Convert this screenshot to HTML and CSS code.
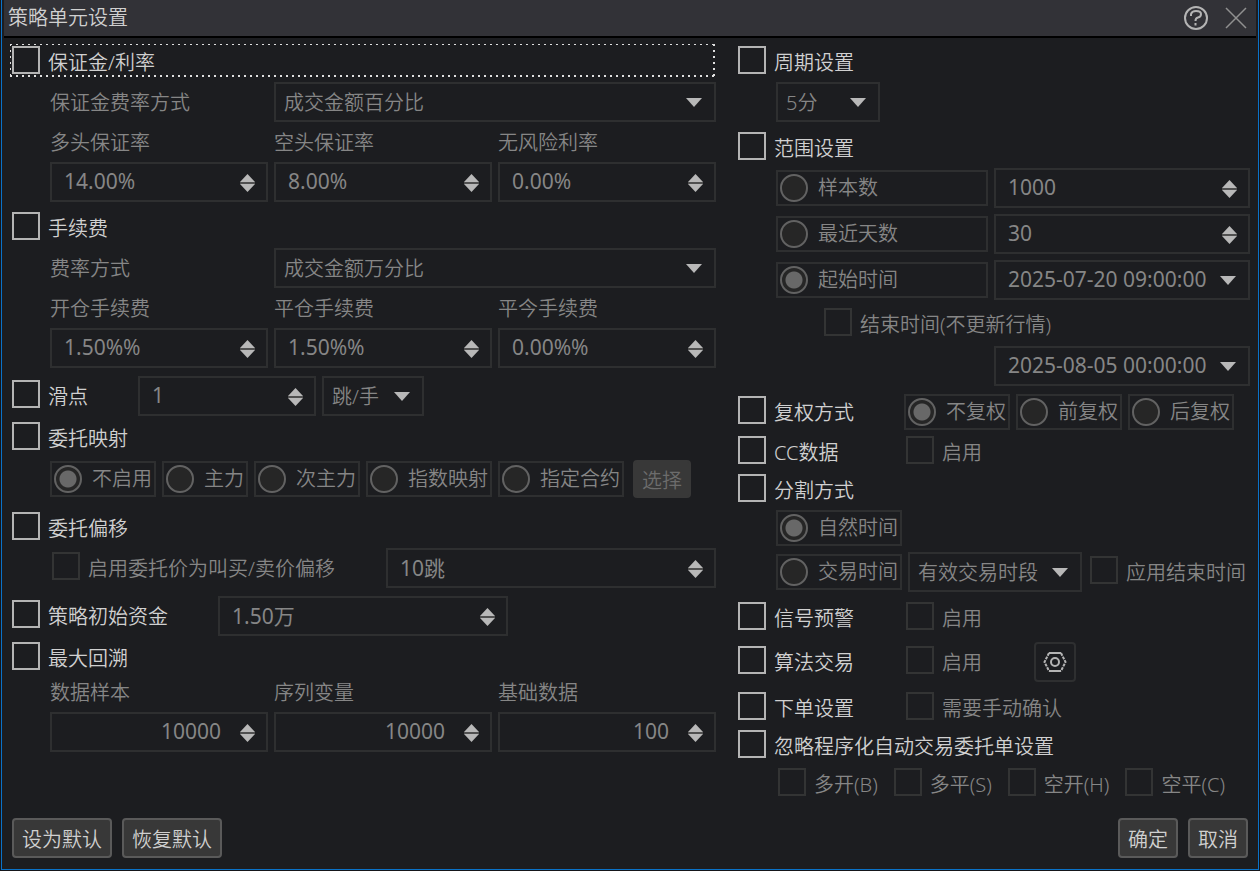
FILE: index.html
```html
<!DOCTYPE html>
<html lang="zh-CN">
<head>
  <meta charset="UTF-8">
  <title>策略单元设置</title>
  <link rel="stylesheet" href="styles.css">
</head>
<body>
  <div class="window">
    <header class="title_bar">
      <h1>策略单元设置</h1>
      <button class="icon_btn" aria-label="帮助">
        <svg width="26" height="26" viewBox="0 0 26 26" fill="none" stroke="#b4b4b4" stroke-width="2">
          <circle cx="13" cy="13" r="11"/>
          <path d="M8 11V9Q9 6 13 6Q18 6 18 9Q18 12 15 12.500Q12.500 13 12.500 16"/>
          <path d="M12.500 18V20.500"/>
        </svg>
      </button>
      <button class="icon_btn" aria-label="关闭">
        <svg width="22" height="22" viewBox="0 0 22 22" fill="none" stroke="#909090" stroke-width="1.500">
          <path d="M1 1L21 21M21 1L1 21"/>
        </svg>
      </button>
    </header>

    <main class="content">
      <!-- 左侧 -->
      <section class="col">
        <label class="check focus"><input type="checkbox">保证金/利率</label>
        <div class="grid3 mt6">
          <label class="text" for="margin_type">保证金费率方式</label>
          <span class="drop wide"><select id="margin_type" disabled><option>成交金额百分比</option></select></span>
        </div>
        <div class="grid3">
          <label class="text" for="long_rate">多头保证率</label>
          <label class="text" for="short_rate">空头保证率</label>
          <label class="text" for="free_rate">无风险利率</label>
          <span class="spin"><input type="text" id="long_rate" value="14.00%" disabled></span>
          <span class="spin"><input type="text" id="short_rate" value="8.00%" disabled></span>
          <span class="spin"><input type="text" id="free_rate" value="0.00%" disabled></span>
        </div>

        <label class="check mt10"><input type="checkbox">手续费</label>
        <div class="grid3 mt6">
          <label class="text" for="fee_type">费率方式</label>
          <span class="drop wide"><select id="fee_type" disabled><option>成交金额万分比</option></select></span>
        </div>
        <div class="grid3">
          <label class="text" for="open_fee">开仓手续费</label>
          <label class="text" for="close_fee">平仓手续费</label>
          <label class="text" for="today_fee">平今手续费</label>
          <span class="spin"><input type="text" id="open_fee" value="1.50%%" disabled></span>
          <span class="spin"><input type="text" id="close_fee" value="1.50%%" disabled></span>
          <span class="spin"><input type="text" id="today_fee" value="0.00%%" disabled></span>
        </div>

        <div class="row mt8">
          <label class="check slip"><input type="checkbox">滑点</label>
          <span class="spin slip_num"><input type="text" value="1" aria-label="滑点" disabled></span>
          <span class="drop slip_unit"><select aria-label="滑点单位" disabled><option>跳/手</option></select></span>
        </div>

        <label class="check mt6"><input type="checkbox">委托映射</label>
        <div class="row inset mt8">
          <label class="radio"><input type="radio" name="mapping" checked disabled>不启用</label>
          <label class="radio"><input type="radio" name="mapping" disabled>主力</label>
          <label class="radio"><input type="radio" name="mapping" disabled>次主力</label>
          <label class="radio"><input type="radio" name="mapping" disabled>指数映射</label>
          <label class="radio"><input type="radio" name="mapping" disabled>指定合约</label>
          <button class="btn choose" disabled>选择</button>
        </div>

        <label class="check mt14"><input type="checkbox">委托偏移</label>
        <div class="row inset mt6">
          <label class="check dim grow"><input type="checkbox" disabled>启用委托价为叫买/卖价偏移</label>
          <span class="spin offset_num"><input type="text" value="10跳" aria-label="偏移" disabled></span>
        </div>

        <div class="row mt8">
          <label class="check fund"><input type="checkbox">策略初始资金</label>
          <span class="spin fund_num"><input type="text" value="1.50万" aria-label="策略初始资金" disabled></span>
        </div>

        <label class="check mt6"><input type="checkbox">最大回溯</label>
        <div class="grid3">
          <label class="text" for="sample">数据样本</label>
          <label class="text" for="series">序列变量</label>
          <label class="text" for="base">基础数据</label>
          <span class="spin right"><input type="text" id="sample" value="10000" disabled></span>
          <span class="spin right"><input type="text" id="series" value="10000" disabled></span>
          <span class="spin right"><input type="text" id="base" value="100" disabled></span>
        </div>
      </section>

      <!-- 右侧 -->
      <section class="col">
        <label class="check"><input type="checkbox">周期设置</label>
        <div class="row inset mt6">
          <span class="drop period"><select aria-label="周期" disabled><option>5分</option></select></span>
        </div>

        <label class="check mt10"><input type="checkbox">范围设置</label>
        <div class="range inset mt6">
          <label class="radio"><input type="radio" name="range" disabled>样本数</label>
          <span class="spin"><input type="text" value="1000" aria-label="样本数" disabled></span>
          <label class="radio"><input type="radio" name="range" disabled>最近天数</label>
          <span class="spin"><input type="text" value="30" aria-label="最近天数" disabled></span>
          <label class="radio"><input type="radio" name="range" checked disabled>起始时间</label>
          <span class="drop"><input type="text" value="2025-07-20 09:00:00" aria-label="起始时间" disabled></span>
        </div>
        <label class="check dim end_time mt8"><input type="checkbox" disabled>结束时间(不更新行情)</label>
        <div class="range inset mt8">
          <span class="drop second"><input type="text" value="2025-08-05 00:00:00" aria-label="结束时间" disabled></span>
        </div>

        <div class="row mt8">
          <label class="check name"><input type="checkbox">复权方式</label>
          <label class="radio"><input type="radio" name="right" checked disabled>不复权</label>
          <label class="radio"><input type="radio" name="right" disabled>前复权</label>
          <label class="radio"><input type="radio" name="right" disabled>后复权</label>
        </div>
        <div class="row mt6">
          <label class="check name"><input type="checkbox">CC数据</label>
          <label class="check dim"><input type="checkbox" disabled>启用</label>
        </div>

        <label class="check mt6"><input type="checkbox">分割方式</label>
        <div class="row inset mt6">
          <label class="radio"><input type="radio" name="split" checked disabled>自然时间</label>
        </div>
        <div class="row inset mt6">
          <label class="radio"><input type="radio" name="split" disabled>交易时间</label>
          <span class="drop session"><select aria-label="交易时段" disabled><option>有效交易时段</option></select></span>
          <label class="check dim"><input type="checkbox" disabled>应用结束时间</label>
        </div>

        <div class="row mt10">
          <label class="check name"><input type="checkbox">信号预警</label>
          <label class="check dim"><input type="checkbox" disabled>启用</label>
        </div>
        <div class="row mt8">
          <label class="check name"><input type="checkbox">算法交易</label>
          <label class="check dim algo"><input type="checkbox" disabled>启用</label>
          <button class="gear" aria-label="算法设置">
            <svg width="24" height="20" viewBox="0 0 24 20" fill="none" stroke="#b4b4b4" stroke-width="2">
              <path d="M6 1H18M6 19H18"/>
              <path d="M6 1L1.500 10L6 19M18 1L22.500 10L18 19" stroke-dasharray="3 1"/>
              <circle cx="12" cy="10" r="4"/>
            </svg>
          </button>
        </div>
        <div class="row mt10">
          <label class="check name"><input type="checkbox">下单设置</label>
          <label class="check dim"><input type="checkbox" disabled>需要手动确认</label>
        </div>

        <label class="check mt6"><input type="checkbox">忽略程序化自动交易委托单设置</label>
        <div class="row inset ignore mt8">
          <label class="check dim"><input type="checkbox" disabled>多开(B)</label>
          <label class="check dim"><input type="checkbox" disabled>多平(S)</label>
          <label class="check dim"><input type="checkbox" disabled>空开(H)</label>
          <label class="check dim"><input type="checkbox" disabled>空平(C)</label>
        </div>
      </section>
    </main>

    <footer class="footer">
      <button class="btn">设为默认</button>
      <button class="btn">恢复默认</button>
      <button class="btn ok">确定</button>
      <button class="btn">取消</button>
    </footer>
  </div>
</body>
</html>
```
FILE: styles.css
```css
* {
  box-sizing: border-box;
  margin: 0;
  padding: 0;
}
body {
  background: #15161a;
  color: #d0d0d0;
}
body,
button,
input,
select {
  font-family: "Noto Sans", "Noto Sans CJK SC", sans-serif;
  font-size: 20px;
  font-weight: 350;
}
.window {
  display: flex;
  flex-direction: column;
  min-height: calc(100vh - 1px);
  margin: 0 1px;
  border: 1px solid #0a72c8;
  border-top: 0;
  background: #1c1d20;
}

/* 标题栏 */
.title_bar {
  display: flex;
  align-items: center;
  gap: 16px;
  height: 38px;
  margin: 0 2px;
  padding: 0 9px 0 4px;
  border-bottom: 2px solid #000;
  background: #323237;
}
.title_bar h1 {
  flex: 1;
  font-size: 20px;
  font-weight: 350;
  line-height: 36px;
}
.icon_btn {
  display: flex;
  border: 0;
  background: none;
}

.content {
  display: grid;
  grid-template-columns: 11fr 8fr;
  gap: 22px;
  padding: 8px 8px 0 10px;
}
.col {
  min-width: 0;
}
.mt6 { margin-top: 6px; }
.mt8 { margin-top: 8px; }
.mt10 { margin-top: 10px; }
.mt14 { margin-top: 14px; }

.row {
  display: flex;
  align-items: center;
  gap: 6px;
}
.inset {
  margin-left: 38px;
}
.grid3 {
  display: grid;
  grid-template-columns: repeat(3, 1fr);
  column-gap: 6px;
  margin-left: 38px;
}
.wide {
  grid-column: span 2;
}
.text {
  height: 40px;
  color: #868686;
  line-height: 42px;
}

/* 复选框 */
.check {
  display: flex;
  gap: 8px;
  height: 30px;
  line-height: 34px;
  white-space: nowrap;
}
.check input {
  flex: none;
  appearance: none;
  width: 28px;
  height: 28px;
  border: 2px solid #b4b4b4;
}
.row .check {
  height: 32px;
}
.check.dim {
  color: #868686;
}
.row .dim {
  margin-left: 2px;
}
.check.dim input {
  border-color: #333434;
}
/* 焦点虚线框 */
.focus {
  position: relative;
}
.focus::after {
  content: "";
  position: absolute;
  top: -2px;
  right: 1px;
  bottom: -1px;
  left: -2px;
  background:
    repeating-linear-gradient(90deg, #e0e0e0 0 2px, transparent 2px 6px) top / 100% 1px no-repeat,
    repeating-linear-gradient(90deg, #e0e0e0 0 2px, transparent 2px 6px) bottom / 100% 2px no-repeat,
    repeating-linear-gradient(#e0e0e0 0 2px, transparent 2px 6px) left / 1px 100% no-repeat,
    repeating-linear-gradient(#e0e0e0 0 2px, transparent 2px 6px) right / 2px 100% no-repeat;
  pointer-events: none;
}

/* 单选框 */
.radio {
  display: flex;
  align-items: center;
  gap: 10px;
  height: 36px;
  padding: 0 2px;
  border: 2px solid #2e2f30;
  color: #868686;
  line-height: 36px;
  white-space: nowrap;
}
.radio input {
  flex: none;
  appearance: none;
  width: 28px;
  height: 28px;
  border: 2px solid #626262;
  border-radius: 50%;
  background: #262626;
}
.radio input:checked {
  background: radial-gradient(circle, #686868 8px, #262626 9px);
}

/* 下拉框和数字框 */
.drop,
.spin {
  position: relative;
  display: block;
}
.drop select,
.drop input,
.spin input {
  display: block;
  appearance: none;
  width: 100%;
  height: 40px;
  border: 2px solid #2e2f30;
  border-radius: 0;
  outline: none;
  background: #1c1d20;
  color: #868686;
  opacity: 1;
}
.drop select {
  padding: 0 28px 0 8px;
}
.drop input,
.spin input {
  padding: 0 32px 2px 12px;
  font-size: 21px;
  font-weight: 400;
}
.spin.right input {
  padding-right: 45px;
  text-align: right;
}
.drop::after,
.spin::after {
  content: "";
  position: absolute;
}
.drop::after {
  top: 16px;
  right: 14px;
  width: 16px;
  height: 9px;
  background: #b8b8b8;
  clip-path: polygon(0 0, 100% 0, 50% 100%);
}
.spin::after {
  top: 12px;
  right: 13px;
  width: 15px;
  height: 18px;
  background: linear-gradient(#b8b8b8 8px, #505050 8px, #505050 10px, #b8b8b8 10px);
  clip-path: polygon(50% 0, 100% 45%, 100% 55%, 50% 100%, 0 55%, 0 45%);
}

.slip { width: 120px; }
.slip_num { width: 178px; }
.slip_unit { width: 102px; }
.grow { flex: 1; }
.offset_num { width: 330px; }
.fund { width: 200px; }
.fund_num { width: 290px; }
.period { width: 104px; }
.session { width: 174px; }
.name { width: 160px; }
.algo { width: 120px; }
.row .algo { margin-right: 2px; }
.end_time { margin-left: 86px; }
.range {
  display: grid;
  grid-template-columns: 212px 1fr;
  gap: 6px;
  align-items: center;
}
.second {
  grid-column: 2;
}
.ignore {
  gap: 14px;
}

/* 按钮 */
.btn {
  height: 40px;
  padding: 0 8px;
  border: 2px solid #5a5a5a;
  border-radius: 4px;
  background: #383838;
  color: #d0d0d0;
}
.choose {
  height: 38px;
  margin-left: 3px;
  padding: 0 7px;
  border-color: #383838;
  color: #6c6c6c;
}
.gear {
  display: flex;
  align-items: center;
  justify-content: center;
  width: 42px;
  height: 40px;
  border: 2px solid #2e2f30;
  border-radius: 4px;
  background: none;
}
.footer {
  display: flex;
  gap: 10px;
  margin-top: auto;
  padding: 10px 10px 11px;
}
.ok {
  margin-left: auto;
}
```
